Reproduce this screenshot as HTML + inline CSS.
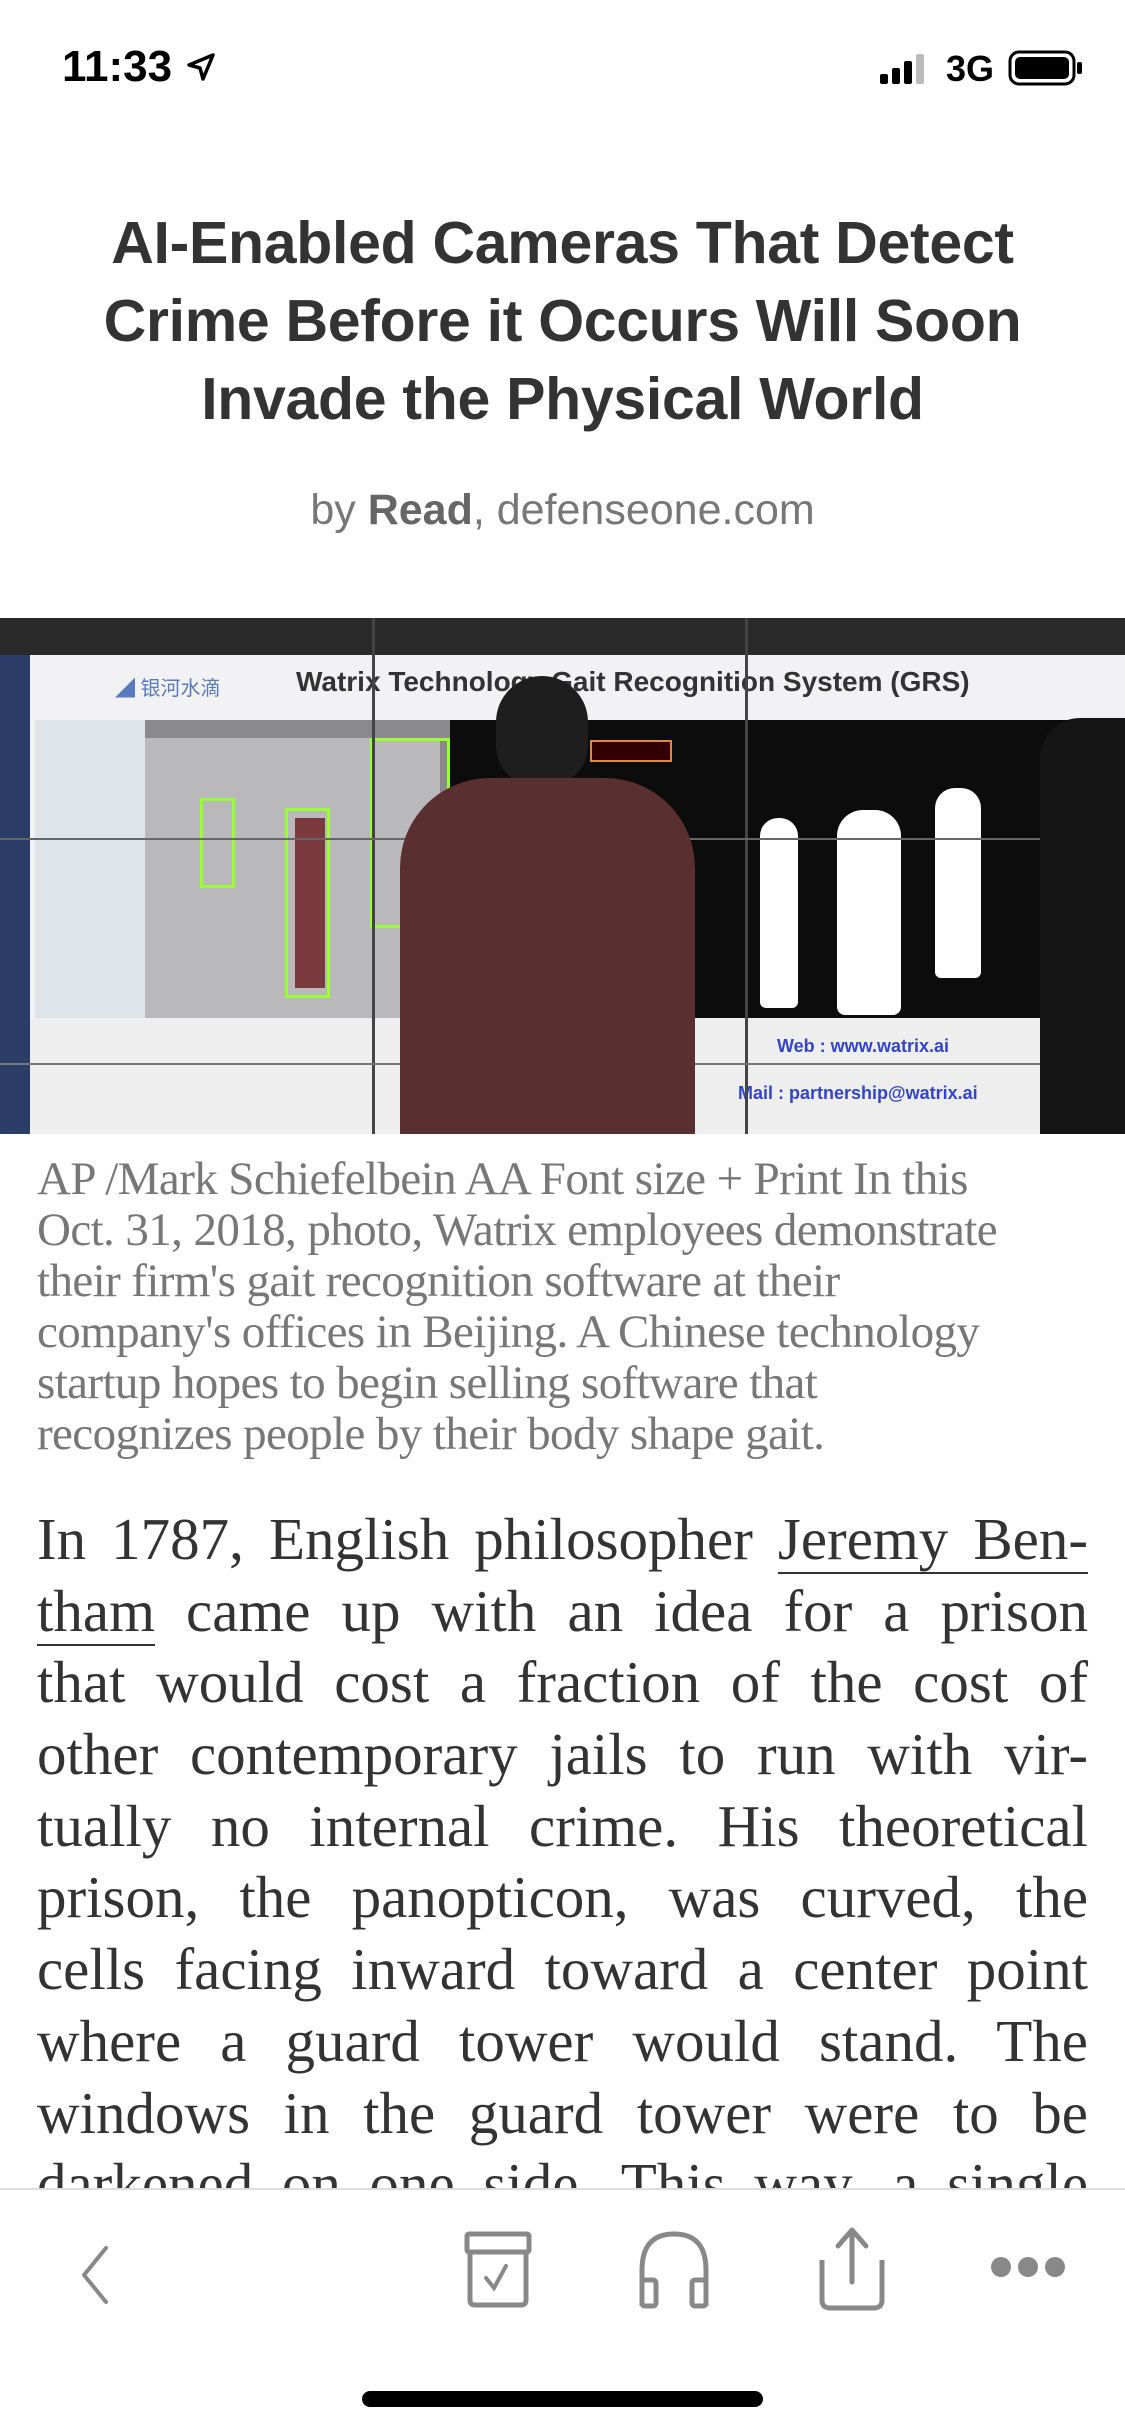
<!DOCTYPE html>
<html><head><meta charset="utf-8"><style>
*{margin:0;padding:0;box-sizing:border-box}
html,body{width:1125px;height:2436px;background:#fff;overflow:hidden;position:relative}
.abs{position:absolute}
.title{position:absolute;left:0;width:1125px;top:204px;text-align:center;font-family:"Liberation Sans",sans-serif;font-weight:bold;font-size:59px;line-height:78px;color:#333;letter-spacing:-0.3px}
.by{position:absolute;left:0;width:1125px;top:486px;text-align:center;font-family:"Liberation Sans",sans-serif;font-size:43px;color:#777}
.by b{color:#666}
.cap{position:absolute;left:37px;top:1154px;font-family:"Liberation Serif",serif;font-size:47px;line-height:51px;color:#777;white-space:nowrap;letter-spacing:-0.6px}
.bodyw{position:absolute;left:0;top:0;width:1125px;height:2188px;overflow:hidden}
.body{position:absolute;left:37px;width:1051px;top:1504px;font-family:"Liberation Serif",serif;font-size:59px;line-height:71.7px;color:#333}
.body div{text-align:justify;text-align-last:justify;white-space:nowrap;height:71.7px}
.u{border-bottom:2px solid #333}
.tb{position:absolute;left:0;top:2188px;width:1125px;height:248px;background:#fff;border-top:2px solid #ddd}
</style></head><body>
<div class="abs" style="left:62px;top:42px;font-family:'Liberation Sans',sans-serif;font-weight:bold;font-size:44px;color:#000">11:33</div>
<svg class="abs" style="left:186px;top:52px" width="30" height="30" viewBox="0 0 30 30"><path d="M27 3 L3 13 L14 16 L17 27 Z" fill="none" stroke="#000" stroke-width="3.5" stroke-linejoin="round"/></svg>
<svg class="abs" style="left:880px;top:52px" width="50" height="32"><rect x="0" y="22" width="8" height="10" rx="2"/><rect x="12" y="16" width="8" height="16" rx="2"/><rect x="24" y="9" width="8" height="23" rx="2"/><rect x="36" y="2" width="8" height="30" rx="2" fill="#bbb"/></svg>
<div class="abs" style="left:946px;top:48px;font-family:'Liberation Sans',sans-serif;font-weight:bold;font-size:36px;color:#000">3G</div>
<svg class="abs" style="left:1008px;top:50px" width="76" height="36"><rect x="2" y="2" width="64" height="32" rx="9" fill="none" stroke="#000" stroke-width="3"/><rect x="7" y="7" width="54" height="22" rx="5"/><rect x="69" y="12" width="5" height="12" rx="2"/></svg>

<div class="title">AI-Enabled Cameras That Detect<br>Crime Before it Occurs Will Soon<br>Invade the Physical World</div>
<div class="by">by <b>Read</b>, defenseone.com</div>

<div class="abs" style="left:0;top:618px;width:1125px;height:516px;background:#222;overflow:hidden">
  <div class="abs" style="left:0;top:0;width:1125px;height:37px;background:#2a2a2a"></div>
  <div class="abs" style="left:0;top:37px;width:30px;height:479px;background:#2b3d66"></div>
  <div class="abs" style="left:30px;top:37px;width:1095px;height:479px;background:#f2f2f4"></div>
  <div class="abs" style="left:115px;top:54px;font-family:'Liberation Sans','Noto Sans CJK SC',sans-serif;font-size:20px;color:#5a7ac0">◢ 银河水滴</div>
  <div class="abs" style="left:296px;top:48px;font-family:'Liberation Sans',sans-serif;font-weight:bold;font-size:28px;color:#333;white-space:nowrap">Watrix Technology Gait Recognition System (GRS)</div>
  <div class="abs" style="left:35px;top:102px;width:415px;height:298px;background:#8a8a8c"></div>
  <div class="abs" style="left:140px;top:120px;width:300px;height:280px;background:#b9b9bb"></div>
  <div class="abs" style="left:35px;top:102px;width:110px;height:300px;background:#dfe3ea"></div>
  <div class="abs" style="left:200px;top:180px;width:35px;height:90px;border:3px solid #9f3;"></div>
  <div class="abs" style="left:285px;top:190px;width:45px;height:190px;border:3px solid #9f3;"></div>
  <div class="abs" style="left:370px;top:120px;width:80px;height:190px;border:3px solid #9f3;"></div>
  <div class="abs" style="left:295px;top:200px;width:30px;height:170px;background:#7a3a3e"></div>
  <div class="abs" style="left:450px;top:102px;width:675px;height:298px;background:#0c0c0c"></div>
  <div class="abs" style="left:590px;top:122px;width:82px;height:22px;border:2px solid #d84;background:#300"></div>
  <div class="abs" style="left:760px;top:200px;width:38px;height:190px;background:#fff;border-radius:18px 18px 6px 6px"></div>
  <div class="abs" style="left:837px;top:192px;width:64px;height:205px;background:#fff;border-radius:26px 26px 8px 8px"></div>
  <div class="abs" style="left:935px;top:170px;width:46px;height:190px;background:#fff;border-radius:20px 20px 6px 6px"></div>
  <div class="abs" style="left:30px;top:400px;width:1095px;height:116px;background:#eeeeef"></div>
  <div class="abs" style="left:777px;top:418px;font-family:'Liberation Sans',sans-serif;font-weight:bold;font-size:18px;color:#3344cc">Web : www.watrix.ai</div>
  <div class="abs" style="left:738px;top:465px;font-family:'Liberation Sans',sans-serif;font-weight:bold;font-size:18px;color:#3344cc">Mail : partnership@watrix.ai</div>
  <div class="abs" style="left:372px;top:0;width:3px;height:516px;background:#444"></div>
  <div class="abs" style="left:745px;top:0;width:3px;height:516px;background:#444"></div>
  <div class="abs" style="left:0;top:220px;width:1125px;height:2px;background:#666"></div>
  <div class="abs" style="left:0;top:445px;width:1125px;height:2px;background:#777"></div>
  <div class="abs" style="left:496px;top:58px;width:92px;height:110px;background:#1e1e1e;border-radius:46px 46px 40px 40px"></div>
  <div class="abs" style="left:400px;top:160px;width:295px;height:370px;background:#5a2f30;border-radius:90px 90px 0 0"></div>
  <div class="abs" style="left:1040px;top:100px;width:85px;height:416px;background:#151515;border-radius:40px 0 0 0"></div>
</div>

<div class="cap">AP /Mark Schiefelbein AA Font size + Print In this<br>Oct. 31, 2018, photo, Watrix employees demonstrate<br>their firm's gait recognition software at their<br>company's offices in Beijing. A Chinese technology<br>startup hopes to begin selling software that<br>recognizes people by their body shape gait.</div>

<div class="bodyw"><div class="body">
<div>In 1787, English philosopher <span class="u">Jeremy Ben-</span></div>
<div><span class="u">tham</span> came up with an idea for a prison</div>
<div>that would cost a fraction of the cost of</div>
<div>other contemporary jails to run with vir-</div>
<div>tually no internal crime. His theoretical</div>
<div>prison, the panopticon, was curved, the</div>
<div>cells facing inward toward a center point</div>
<div>where a guard tower would stand. The</div>
<div>windows in the guard tower were to be</div>
<div>darkened on one side. This way, a single</div>
<div>guard would be able to observe the</div>
</div></div>

<div class="tb">
  <svg class="abs" style="left:70px;top:50px" width="50" height="70" viewBox="0 0 50 70"><path d="M36 8 L14 35 L36 62" fill="none" stroke="#888" stroke-width="4" stroke-linecap="round" stroke-linejoin="round"/></svg>
  <svg class="abs" style="left:460px;top:40px" width="76" height="80" viewBox="0 0 76 80"><rect x="7" y="4" width="62" height="18" rx="2" fill="none" stroke="#888" stroke-width="5"/><path d="M10 22 V70 Q10 75 15 75 H61 Q66 75 66 70 V22" fill="none" stroke="#888" stroke-width="5"/><path d="M26 48 L34 58 L46 36" fill="none" stroke="#888" stroke-width="4" stroke-linecap="round"/></svg>
  <svg class="abs" style="left:636px;top:38px" width="76" height="84" viewBox="0 0 76 84"><path d="M6 78 V42 Q6 6 38 6 Q70 6 70 42 V78" fill="none" stroke="#888" stroke-width="5"/><rect x="6" y="52" width="14" height="26" rx="3" fill="none" stroke="#888" stroke-width="5"/><rect x="56" y="52" width="14" height="26" rx="3" fill="none" stroke="#888" stroke-width="5"/></svg>
  <svg class="abs" style="left:814px;top:34px" width="76" height="90" viewBox="0 0 76 90"><path d="M38 58 V6 M24 22 L38 6 L52 22" fill="none" stroke="#888" stroke-width="5" stroke-linecap="round" stroke-linejoin="round"/><path d="M8 36 V76 Q8 84 16 84 H60 Q68 84 68 76 V36" fill="none" stroke="#888" stroke-width="5"/></svg>
  <svg class="abs" style="left:990px;top:62px" width="76" height="30"><circle cx="11" cy="15" r="10" fill="#888"/><circle cx="38" cy="15" r="10" fill="#888"/><circle cx="65" cy="15" r="10" fill="#888"/></svg>
  <div class="abs" style="left:362px;top:201px;width:401px;height:16px;border-radius:8px;background:#000"></div>
</div>
</body></html>
